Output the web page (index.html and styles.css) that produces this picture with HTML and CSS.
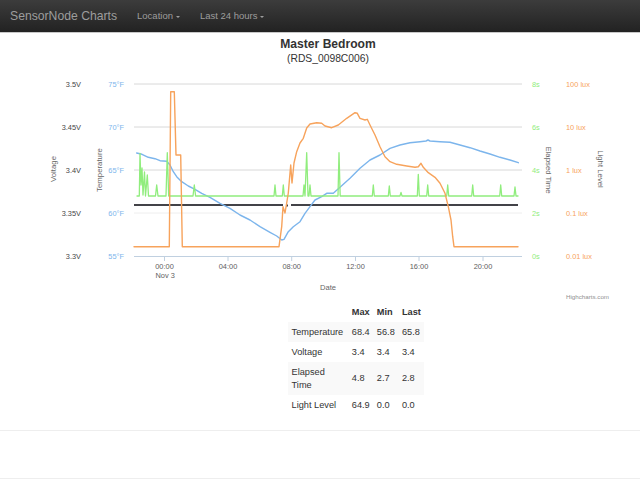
FILE: index.html
```html
<!DOCTYPE html>
<html>
<head>
<meta charset="utf-8">
<title>SensorNode Charts</title>
<link rel="stylesheet" href="styles.css">
</head>
<body>
<nav class="navbar">
  <a class="brand" href="#">SensorNode Charts</a>
  <a class="nav-link" href="#">Location <span class="caret caret-spaced"></span></a>
  <a class="nav-link" href="#">Last 24 hours<span class="caret"></span></a>
</nav>

<main class="content">
  <svg class="chart" width="640" height="268" viewBox="0 32 640 268" xmlns="http://www.w3.org/2000/svg">
    <text class="title" x="328" y="48">Master Bedroom</text>
    <text class="subtitle" x="328" y="61.5">(RDS_0098C006)</text>

    <g class="grid">
      <line x1="134" y1="84" x2="522" y2="84"/>
      <line x1="134" y1="127" x2="522" y2="127"/>
      <line x1="134" y1="170" x2="522" y2="170"/>
      <line class="grid-light" x1="134" y1="213" x2="522" y2="213"/>
    </g>
    <g class="axis">
      <line x1="134" y1="256.5" x2="522" y2="256.5"/>
      <line x1="164.5" y1="256.5" x2="164.5" y2="261"/>
      <line x1="228" y1="256.5" x2="228" y2="261"/>
      <line x1="291.7" y1="256.5" x2="291.7" y2="261"/>
      <line x1="355.5" y1="256.5" x2="355.5" y2="261"/>
      <line x1="419" y1="256.5" x2="419" y2="261"/>
      <line x1="483" y1="256.5" x2="483" y2="261"/>
    </g>

    <g class="lbl lbl-volt">
      <text x="81" y="86.7">3.5V</text>
      <text x="81" y="129.7">3.45V</text>
      <text x="81" y="172.7">3.4V</text>
      <text x="81" y="215.7">3.35V</text>
      <text x="81" y="258.7">3.3V</text>
    </g>
    <g class="lbl lbl-temp">
      <text x="124" y="86.7">75°F</text>
      <text x="124" y="129.7">70°F</text>
      <text x="124" y="172.7">65°F</text>
      <text x="124" y="215.7">60°F</text>
      <text x="124" y="258.7">55°F</text>
    </g>
    <g class="lbl lbl-time">
      <text x="532" y="86.7">8s</text>
      <text x="532" y="129.7">6s</text>
      <text x="532" y="172.7">4s</text>
      <text x="532" y="215.7">2s</text>
      <text x="532" y="258.7">0s</text>
    </g>
    <g class="lbl lbl-lux">
      <text x="566" y="86.7">100 lux</text>
      <text x="566" y="129.7">10 lux</text>
      <text x="566" y="172.7">1 lux</text>
      <text x="566" y="215.7">0.1 lux</text>
      <text x="566" y="258.7">0.01 lux</text>
    </g>

    <g class="axis-title">
      <text transform="translate(56 169) rotate(-90)">Voltage</text>
      <text transform="translate(102 170) rotate(-90)">Temperature</text>
      <text transform="translate(545.5 170) rotate(90)">Elapsed Time</text>
      <text transform="translate(598 169) rotate(90)">Light Level</text>
    </g>

    <g class="lbl lbl-x">
      <text x="164.5" y="268.8">00:00</text>
      <text x="228" y="268.8">04:00</text>
      <text x="291.7" y="268.8">08:00</text>
      <text x="355.5" y="268.8">12:00</text>
      <text x="419" y="268.8">16:00</text>
      <text x="483" y="268.8">20:00</text>
    </g>
    <text class="lbl lbl-date" x="155.5" y="277.8">Nov 3</text>
    <text class="axis-title x-title" x="328" y="290">Date</text>

    <path class="s-volt" d="M134,205 L283,205 M286,205.5 L288,205.5 M291,205 L518,205"/>
    <path class="s-temp" d="M136.7,153 L142,154.3 L148.3,157.3 L155,158.7 L160,160.7 L166.7,161.3 L170,165 L173.3,171.7 L176.7,176.7 L181.7,181.7 L188.3,186 L195,189.3 L201.7,193.3 L210,197.3 L220,203.3 L230,208.3 L240,215 L250,220 L260,226.7 L270,232.3 L276.7,236 L281.7,240 L284,239.3 L288.3,231.7 L293.3,226.7 L300,221.7 L305,213.3 L310,206.7 L315,200 L321.7,196.7 L326.7,193.3 L333.3,193.3 L340,187.3 L350,178.3 L360,168.3 L370,160 L380,155 L390,148.3 L400,145 L410,142.7 L420,141.7 L426,141 L428,140 L430,141 L440,141.7 L450,142.3 L460,145 L470,147.7 L480,151 L490,154 L500,157.3 L510,160 L518.3,162.7"/>
    <path class="s-time" d="M137,196 L139.3,196 L140,153.3 L141,185 L142,168 L143,195 L144.5,172 L145.5,196 L147.3,175 L148.5,196 L155.5,196 L156.7,185 L158,196 L166,196 L167.3,152.7 L168.7,196 L193,196 L194.3,185 L195.6,196 L274,196 L275,185 L276,196 L282.3,196 L283.3,185 L284.3,196 L303,196 L304,185 L305,196 L306.7,152.7 L308,196 L309,196 L310,185 L311,196 L338,196 L339,152.7 L340.2,196 L372.3,196 L373.3,185 L374.3,196 L388.3,196 L389.3,186 L390.3,196 L400,196 L401,192.3 L402,196 L417.3,196 L418.3,174.3 L419.3,196 L426.7,196 L427.7,185 L428.7,196 L446.7,196 L447.7,185 L448.7,196 L471.7,196 L472.7,185 L473.7,196 L499.7,196 L500.7,185 L501.7,196 L514,196 L515,187 L516,196 L518,196"/>
    <path class="s-lux" d="M134,246.7 L169.3,246.7 L170.7,91.7 L174.3,91.7 L176,155 L180.7,155 L182.3,246.7 L279,246.7 L281.7,226.7 L283,206.7 L285,213 L286.7,203 L288.3,193 L290.7,165 L292,183 L294,163 L296.7,151.7 L300,143 L303.3,138.3 L306.7,128 L310,124 L316.7,122.7 L321.7,123.3 L325,126 L331.7,127.7 L338.3,125 L346.7,118.3 L355,112.7 L357.3,113.3 L360,118.3 L365,120 L367.3,119.3 L370,125 L375,135 L380,146.7 L385,156.7 L390,161.7 L396.7,164.3 L406.7,166 L415,167.3 L418.3,166.7 L421,163.3 L423.3,167.3 L428.3,172.7 L435,177.3 L440,183.3 L445,193.3 L448.3,206.7 L451,220 L452.7,236.7 L454,246.7 L518,246.7"/>

    <text class="credits" x="566" y="298.5">Highcharts.com</text>
  </svg>

  <table class="stats">
    <thead>
      <tr><th class="name-col"></th><th>Max</th><th>Min</th><th>Last</th></tr>
    </thead>
    <tbody>
      <tr><td class="name-col">Temperature</td><td>68.4</td><td>56.8</td><td>65.8</td></tr>
      <tr><td class="name-col">Voltage</td><td>3.4</td><td>3.4</td><td>3.4</td></tr>
      <tr><td class="name-col">Elapsed Time</td><td>4.8</td><td>2.7</td><td>2.8</td></tr>
      <tr><td class="name-col">Light Level</td><td>64.9</td><td>0.0</td><td>0.0</td></tr>
    </tbody>
  </table>
</main>

<hr class="divider">
<footer class="footer"></footer>
</body>
</html>
```

FILE: styles.css
```css
html, body {
  margin: 0;
  padding: 0;
  background: #fff;
}

body {
  font-family: "Liberation Sans", Arial, sans-serif;
  color: #333;
}

.navbar {
  display: flex;
  align-items: center;
  height: 32px;
  background: linear-gradient(to bottom, #3c3c3c 0%, #222 100%);
  box-shadow: 0 1px 0 #c8c8c8;
}

.navbar a {
  text-decoration: none;
  color: #9d9d9d;
}

.brand {
  font-size: 12.2px;
  padding: 0 10px 0 10px;
  line-height: 32px;
}

.nav-link {
  font-size: 9.5px;
  padding: 0 10px;
  line-height: 32px;
  display: flex;
  align-items: center;
}

.caret {
  display: inline-block;
  width: 0;
  height: 0;
  margin-left: 2px;
  border-top: 2.6px solid #9d9d9d;
  border-left: 2.4px solid transparent;
  border-right: 2.4px solid transparent;
  margin-top: 1px;
}

.caret-spaced {
  margin-left: 3px;
}

.content {
  display: flex;
  flex-direction: column;
}

.chart {
  display: block;
  font-family: "Liberation Sans", Arial, sans-serif;
}

.title {
  font-size: 12.1px;
  font-weight: bold;
  fill: #333;
  text-anchor: middle;
}

.subtitle {
  font-size: 10.3px;
  fill: #333;
  text-anchor: middle;
}

.grid line {
  stroke: #d8d8d8;
  stroke-width: 1;
}

.grid .grid-light {
  stroke: #eeeeee;
}

.axis line {
  stroke: #c0d0e0;
  stroke-width: 1;
}

.lbl {
  font-size: 7.4px;
}

.lbl-volt text {
  fill: #444;
  text-anchor: end;
}

.lbl-temp text {
  fill: #7cb5ec;
  text-anchor: end;
}

.lbl-time text {
  fill: #90ed7d;
}

.lbl-lux text {
  fill: #f7a35c;
}

.lbl-x text {
  fill: #606060;
  text-anchor: middle;
}

.lbl-date {
  fill: #606060;
}

.axis-title {
  font-size: 7.8px;
  fill: #666;
  text-anchor: middle;
}

.x-title {
  font-size: 7.6px;
}

.credits {
  font-size: 6.2px;
  fill: #909090;
}

.s-volt, .s-temp, .s-time, .s-lux {
  fill: none;
  stroke-linejoin: round;
  stroke-linecap: round;
}

.s-volt {
  stroke: #434348;
  stroke-width: 2;
  stroke-linecap: butt;
}

.s-temp {
  stroke: #7cb5ec;
  stroke-width: 1.4;
}

.s-time {
  stroke: #90ed7d;
  stroke-width: 1.3;
}

.s-lux {
  stroke: #f7a35c;
  stroke-width: 1.4;
}

.stats {
  margin: 2px 0 0 288px;
  border-collapse: collapse;
  font-size: 9.2px;
  line-height: 13px;
  color: #333;
  align-self: flex-start;
}

.stats th,
.stats td {
  padding: 3.5px 3.6px;
  text-align: left;
  vertical-align: middle;
}

.stats th {
  font-weight: bold;
}

.stats .name-col {
  width: 53px;
}

.stats tbody tr:nth-child(odd) {
  background: #f9f9f9;
}

.divider {
  margin: 15px 0 0 0;
  border: 0;
  border-top: 1px solid #eee;
}

.footer {
  height: 47px;
  border-bottom: 1px solid #eee;
}
```
